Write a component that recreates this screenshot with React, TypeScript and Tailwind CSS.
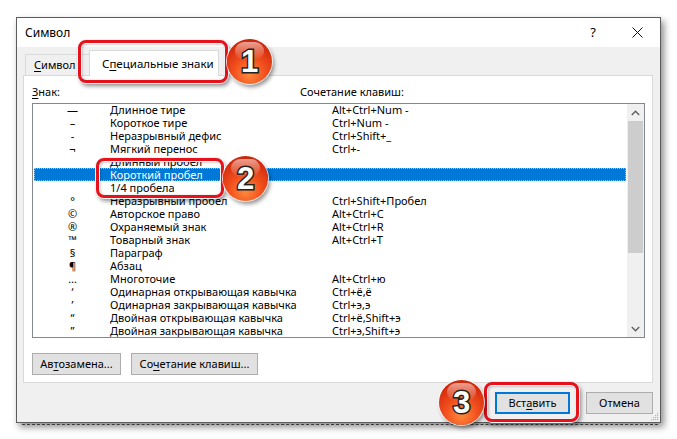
import React from "react";

type Row = [string, string, string];

const rows: Row[] = [
  ["—", "Длинное тире", "Alt+Ctrl+Num -"],
  ["–", "Короткое тире", "Ctrl+Num -"],
  ["-", "Неразрывный дефис", "Ctrl+Shift+_"],
  ["¬", "Мягкий перенос", "Ctrl+-"],
  ["", "Длинный пробел", ""],
  ["", "Короткий пробел", ""],
  ["", "1/4 пробела", ""],
  ["°", "Неразрывный пробел", "Ctrl+Shift+Пробел"],
  ["©", "Авторское право", "Alt+Ctrl+C"],
  ["®", "Охраняемый знак", "Alt+Ctrl+R"],
  ["™", "Товарный знак", "Alt+Ctrl+T"],
  ["§", "Параграф", ""],
  ["¶", "Абзац", ""],
  ["…", "Многоточие", "Alt+Ctrl+ю"],
  ["‘", "Одинарная открывающая кавычка", "Ctrl+ё,ё"],
  ["’", "Одинарная закрывающая кавычка", "Ctrl+э,э"],
  ["“", "Двойная открывающая кавычка", "Ctrl+ё,Shift+э"],
  ["”", "Двойная закрывающая кавычка", "Ctrl+э,Shift+э"],
];

const SELECTED = 5;

function Badge({ n, className }: { n: string; className: string }) {
  return (
    <div
      className={`absolute flex h-[45px] w-[45px] items-center justify-center rounded-full bg-[radial-gradient(circle_at_50%_78%,#ff8a3c_0%,#f2501e_38%,#d8300f_70%,#b01a06_100%)] shadow-[0_0_0_1px_rgba(255,255,255,0.8),2px_3px_4px_rgba(0,0,0,0.45)] ${className}`}
    >
      <div className="absolute left-[8px] top-[3px] h-[18px] w-[29px] rounded-full bg-[linear-gradient(to_bottom,rgba(255,255,255,0.55),rgba(255,255,255,0))]" />
      <span className="relative font-['Liberation_Sans',sans-serif] text-[31px] font-bold leading-none text-white [-webkit-text-stroke:3px_#222] [paint-order:stroke_fill]">
        {n}
      </span>
    </div>
  );
}

function Frame({ className }: { className: string }) {
  return (
    <div
      className={`pointer-events-none absolute rounded-[8px] border-[3px] border-[#e5121c] shadow-[0_0_0_1px_#f2f2f2,inset_0_0_0_1px_#f2f2f2,inset_1px_1px_3px_rgba(0,0,0,0.35),2px_3px_4px_rgba(0,0,0,0.45)] ${className}`}
    />
  );
}

function Chevron({ up }: { up: boolean }) {
  return (
    <svg width="9" height="6" viewBox="0 0 9 6" className="block">
      <path
        d={up ? "M0.8 5 L4.5 1.3 L8.2 5" : "M0.8 1 L4.5 4.7 L8.2 1"}
        fill="none"
        stroke="#606060"
        strokeWidth="1.4"
      />
    </svg>
  );
}

export default function App() {
  return (
    <div className="relative h-[439px] w-[677px] overflow-hidden bg-white pl-[16px] pt-[17px] font-['Noto_Sans',sans-serif] text-[11px] text-black">
      {/* dotted text line peeking below the dialog */}
      <div className="absolute left-[22px] top-[424px] h-0 w-[636px] border-t border-dashed border-[#555]" />

      <div className="relative flex h-[406px] w-[645px] flex-col border border-[#5c5c5c] bg-[#f0f0f0] shadow-[3px_4px_7px_rgba(0,0,0,0.45)]">
        {/* title bar */}
        <div className="flex h-[29px] shrink-0 items-center bg-white pl-[8px] text-[12px]">
          <span className="leading-none">Символ</span>
          <span className="ml-auto mr-[36px] text-[13px] leading-none">?</span>
          <svg width="11" height="11" viewBox="0 0 11 11" className="mr-[17px]">
            <path d="M0.5 0.5 L10.5 10.5 M10.5 0.5 L0.5 10.5" stroke="#111" strokeWidth="1" />
          </svg>
        </div>

        <div className="flex flex-1 flex-col px-[6px]">
          {/* tabs */}
          <div className="flex h-[28px] shrink-0 items-end pl-[2px]">
            <div className="flex h-[21px] w-[65px] items-center border border-b-0 border-[#d9d9d9] bg-[#f0f0f0] pl-[8px]">
              <span>
                <u className="underline-offset-2">С</u>имвол
              </span>
            </div>
            <div className="relative z-10 -mb-px -ml-[1px] flex h-[26px] w-[130px] items-center border border-b-0 border-[#d9d9d9] bg-white pl-[12px] text-[11.5px]">
              <span>
                С<u className="underline-offset-2">п</u>ециальные знаки
              </span>
            </div>
          </div>

          {/* tab page */}
          <div className="flex h-[308px] w-[630px] shrink-0 flex-col border border-[#d9d9d9] bg-white px-[8px] pt-[8px]">
            <div className="flex h-[17px] items-center">
              <span className="w-[268px]">
                <u className="underline-offset-2">З</u>нак:
              </span>
              <span>Сочетание клавиш:</span>
            </div>

            <div className="mt-[2px] flex h-[235px] w-[613px] border border-[#828790]">
              <div className="flex-1 overflow-hidden px-[1px]">
                <div className="-mt-px">
                  {rows.map(([sym, name, keys], i) => (
                    <div
                      key={name}
                      className={
                        i === SELECTED
                          ? "flex h-[13px] items-center border border-dotted border-[#8cc4f4] bg-[#0078d7] leading-[11px] text-white"
                          : "flex h-[13px] items-center border border-transparent leading-[11px]"
                      }
                    >
                      <span className="w-[75px] text-center">{sym}</span>
                      <span className="w-[222px]">{name}</span>
                      <span>{keys}</span>
                    </div>
                  ))}
                </div>
              </div>
              {/* vertical scrollbar */}
              <div className="flex w-[17px] flex-col bg-[#f0f0f0]">
                <div className="flex h-[17px] items-center justify-center">
                  <Chevron up />
                </div>
                <div className="flex-1">
                  <div className="mx-[1px] h-[132px] bg-[#cdcdcd]" />
                </div>
                <div className="flex h-[17px] items-center justify-center">
                  <Chevron up={false} />
                </div>
              </div>
            </div>

            <div className="mt-[15px] flex gap-[10px]">
              <button className="flex h-[22px] w-[89px] items-center justify-center border border-[#adadad] bg-[#e1e1e1]">
                <span>
                  Ав<u className="underline-offset-2">т</u>озамена...
                </span>
              </button>
              <button className="flex h-[22px] w-[127px] items-center justify-center border border-[#adadad] bg-[#e1e1e1]">
                <span>
                  Со<u className="underline-offset-2">ч</u>етание клавиш...
                </span>
              </button>
            </div>
          </div>

          {/* dialog buttons */}
          <div className="flex justify-end gap-[16px] pr-[1px] pt-[9px]">
            <button className="flex h-[22px] w-[75px] items-center justify-center border-2 border-[#0078d7] bg-[#e1e1e1]">
              <span>
                Вст<u className="underline-offset-2">а</u>вить
              </span>
            </button>
            <button className="flex h-[22px] w-[67px] items-center justify-center border border-[#adadad] bg-[#e1e1e1]">
              Отмена
            </button>
          </div>
        </div>

        {/* size grip */}
        <svg width="10" height="10" viewBox="0 0 10 10" className="absolute bottom-[1px] right-[1px]">
          <g fill="#b8b8b8">
            <rect x="8" y="2" width="1.2" height="1.2" />
            <rect x="6" y="4" width="1.2" height="1.2" />
            <rect x="8" y="4" width="1.2" height="1.2" />
            <rect x="4" y="6" width="1.2" height="1.2" />
            <rect x="6" y="6" width="1.2" height="1.2" />
            <rect x="8" y="6" width="1.2" height="1.2" />
            <rect x="2" y="8" width="1.2" height="1.2" />
            <rect x="4" y="8" width="1.2" height="1.2" />
            <rect x="6" y="8" width="1.2" height="1.2" />
            <rect x="8" y="8" width="1.2" height="1.2" />
          </g>
        </svg>
      </div>

      {/* callouts */}
      <Frame className="left-[78px] top-[40px] h-[43px] w-[150px]" />
      <Badge n="1" className="left-[227px] top-[39px]" />
      <Frame className="left-[96px] top-[158px] h-[40px] w-[128px]" />
      <Badge n="2" className="left-[223px] top-[156px]" />
      <Frame className="left-[484px] top-[382px] h-[40px] w-[95px]" />
      <Badge n="3" className="left-[439px] top-[380px]" />
    </div>
  );
}
